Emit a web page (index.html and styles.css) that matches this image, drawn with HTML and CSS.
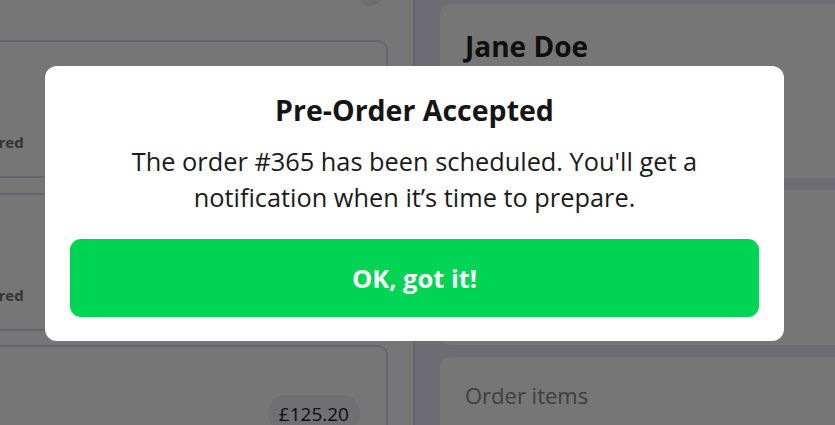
FILE: index.html
```html
<!DOCTYPE html>
<html lang="en">
<head>
<meta charset="utf-8">
<title>Pre-Order Accepted</title>
<link rel="stylesheet" href="styles.css">
</head>
<body>
<div class="page">
  <section class="list">
    <div class="list-head"><span class="avatar"></span></div>
    <div class="order-card">
      <span class="status">Delivered</span>
    </div>
    <div class="order-card">
      <span class="status">Delivered</span>
    </div>
    <div class="order-card order-card--price">
      <div class="price-row"><span class="price">£125.20</span></div>
    </div>
  </section>
  <section class="detail">
    <div class="panel panel--customer">
      <h2 class="customer-name">Jane Doe</h2>
    </div>
    <div class="panel panel--info"></div>
    <div class="panel panel--items">
      <h3 class="items-title">Order items</h3>
    </div>
  </section>
</div>

<div class="overlay">
  <div class="modal" role="dialog" aria-labelledby="modal-title">
    <h1 class="modal-title" id="modal-title">Pre-Order Accepted</h1>
    <p class="modal-text">The order #365 has been scheduled. You'll get a notification when it’s time to prepare.</p>
    <button class="modal-btn" type="button">OK, got it!</button>
  </div>
</div>
</body>
</html>
```

FILE: styles.css
```css
* { box-sizing: border-box; }

html, body {
  margin: 0;
  height: 100%;
  overflow: hidden;
}

body {
  font-family: "Open Sans", "Noto Sans", "Liberation Sans", sans-serif;
  background: #e9e9f6;
  color: #222;
}

.page {
  display: flex;
  height: 425px;
  overflow: hidden;
}

/* left list */
.list {
  width: 415px;
  flex: none;
  background: #ffffff;
  border-right: 2px solid #dadaf0;
  padding: 0 25px 0 0;
  display: flex;
  flex-direction: column;
  gap: 15px;
}

.list-head {
  flex: none;
  height: 25px;
  display: flex;
  justify-content: flex-end;
  padding-right: 5px;
}

.avatar {
  width: 26px;
  height: 26px;
  margin-top: -20px;
  border-radius: 50%;
  background: #eeeef4;
}

.order-card {
  flex: none;
  height: 138px;
  margin-left: -70px;
  border: 2px solid #dadaf0;
  border-radius: 10px;
  background: #fff;
  padding: 90px 0 0 20px;
}

.order-card + .order-card--price { margin-top: -1px; }

.status {
  display: block;
  font-size: 15px;
  line-height: 20px;
  font-weight: 700;
  color: #717171;
}

.order-card--price {
  height: 200px;
  padding: 48px 26px 0 0;
}

.price-row {
  display: flex;
  justify-content: flex-end;
}

.price {
  display: inline-block;
  height: 36px;
  padding: 0 11px;
  border-radius: 18px;
  background: #f1f1f6;
  font-size: 19px;
  line-height: 38px;
  color: #222;
}

/* right detail */
.detail {
  flex: 1;
  padding: 4px 0 0 25px;
  display: flex;
  flex-direction: column;
  gap: 12px;
}

.panel {
  flex: none;
  margin-right: -20px;
  background: #fff;
  border-radius: 10px;
  padding: 25px 25px 0;
}

.panel--customer { height: 174px; }
.panel--info { height: 155px; }
.panel--items { height: 120px; padding-top: 24px; }

.customer-name {
  margin: 0;
  font-size: 28px;
  line-height: 34px;
  font-weight: 700;
  color: #222;
}

.items-title {
  margin: 0;
  font-size: 22px;
  line-height: 28px;
  font-weight: 400;
  color: #888;
}

/* modal */
.overlay {
  position: fixed;
  inset: 0;
  background: rgba(0, 0, 0, 0.537);
  display: flex;
  align-items: flex-start;
  justify-content: flex-start;
  padding: 66px 0 0 45px;
}

.modal {
  width: 739px;
  background: #fff;
  border-radius: 12px;
  padding: 26px 25px 24px;
  display: flex;
  flex-direction: column;
  align-items: stretch;
  text-align: center;
}

.modal-title {
  margin: 0;
  font-size: 28.5px;
  line-height: 36px;
  font-weight: 700;
  color: #151515;
}

.modal-text {
  margin: 15px 0 0;
  padding: 0 40px;
  font-size: 25.35px;
  line-height: 36px;
  font-weight: 400;
  color: #1a1a1a;
}

.modal-btn {
  margin-top: 24px;
  height: 78px;
  border: 0;
  border-radius: 11px;
  background: #00d454;
  color: #fff;
  font-family: inherit;
  font-size: 25.5px;
  font-weight: 700;
  line-height: 78px;
  padding: 0;
  cursor: pointer;
}
```
